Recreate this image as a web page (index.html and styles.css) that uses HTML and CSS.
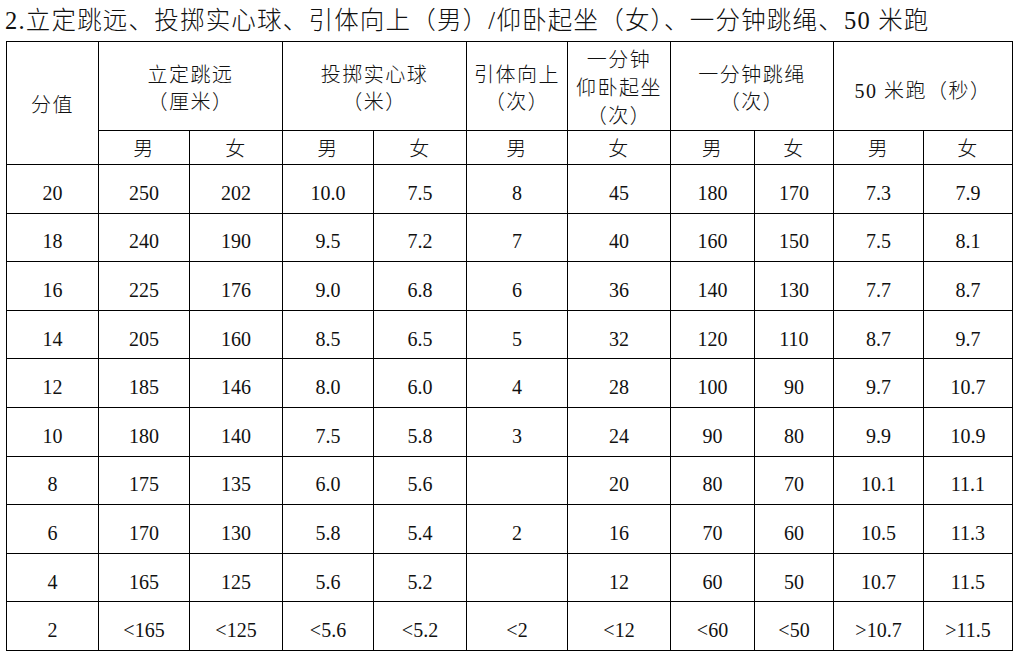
FILE: index.html
```html
<!DOCTYPE html>
<html lang="zh-CN">
<head>
<meta charset="utf-8">
<title>体育评分标准</title>
<link rel="stylesheet" href="styles.css">
</head>
<body>
<h1 class="title">2.立定跳远、投掷实心球、引体向上（男）/仰卧起坐（女）、一分钟跳绳、50 米跑</h1>
<table class="score">
  <colgroup>
    <col class="c1"><col class="c2"><col class="c3"><col class="c4"><col class="c5"><col class="c6"><col class="c7"><col class="c8"><col class="c9"><col class="c10"><col class="c11">
  </colgroup>
  <thead>
    <tr class="h1">
      <th rowspan="2" class="score-col">分值</th>
      <th colspan="2">立定跳远<br>（厘米）</th>
      <th colspan="2">投掷实心球<br>（米）</th>
      <th>引体向上<br>（次）</th>
      <th class="three">一分钟<br>仰卧起坐<br>（次）</th>
      <th colspan="2">一分钟跳绳<br>（次）</th>
      <th colspan="2" class="run">50 米跑（秒）</th>
    </tr>
    <tr class="h2">
      <th>男</th><th>女</th><th>男</th><th>女</th><th>男</th><th>女</th><th>男</th><th>女</th><th>男</th><th>女</th>
    </tr>
  </thead>
  <tbody>
    <tr><td>20</td><td>250</td><td>202</td><td>10.0</td><td>7.5</td><td>8</td><td>45</td><td>180</td><td>170</td><td>7.3</td><td>7.9</td></tr>
    <tr><td>18</td><td>240</td><td>190</td><td>9.5</td><td>7.2</td><td>7</td><td>40</td><td>160</td><td>150</td><td>7.5</td><td>8.1</td></tr>
    <tr><td>16</td><td>225</td><td>176</td><td>9.0</td><td>6.8</td><td>6</td><td>36</td><td>140</td><td>130</td><td>7.7</td><td>8.7</td></tr>
    <tr><td>14</td><td>205</td><td>160</td><td>8.5</td><td>6.5</td><td>5</td><td>32</td><td>120</td><td>110</td><td>8.7</td><td>9.7</td></tr>
    <tr><td>12</td><td>185</td><td>146</td><td>8.0</td><td>6.0</td><td>4</td><td>28</td><td>100</td><td>90</td><td>9.7</td><td>10.7</td></tr>
    <tr><td>10</td><td>180</td><td>140</td><td>7.5</td><td>5.8</td><td>3</td><td>24</td><td>90</td><td>80</td><td>9.9</td><td>10.9</td></tr>
    <tr><td>8</td><td>175</td><td>135</td><td>6.0</td><td>5.6</td><td></td><td>20</td><td>80</td><td>70</td><td>10.1</td><td>11.1</td></tr>
    <tr><td>6</td><td>170</td><td>130</td><td>5.8</td><td>5.4</td><td>2</td><td>16</td><td>70</td><td>60</td><td>10.5</td><td>11.3</td></tr>
    <tr><td>4</td><td>165</td><td>125</td><td>5.6</td><td>5.2</td><td></td><td>12</td><td>60</td><td>50</td><td>10.7</td><td>11.5</td></tr>
    <tr><td>2</td><td>&lt;165</td><td>&lt;125</td><td>&lt;5.6</td><td>&lt;5.2</td><td>&lt;2</td><td>&lt;12</td><td>&lt;60</td><td>&lt;50</td><td>&gt;10.7</td><td>&gt;11.5</td></tr>
  </tbody>
</table>
</body>
</html>
```
FILE: styles.css
```css
html, body {
  margin: 0;
  padding: 0;
  background: #ffffff;
}
body {
  font-family: "Liberation Serif", "Noto Sans CJK SC", serif;
  color: #111111;
}
.title {
  margin: 0;
  padding: 6px 0 0 5px;
  height: 41px;
  box-sizing: border-box;
  font-size: 24.5px;
  line-height: 30px;
  font-weight: 300;
  letter-spacing: 1.2px;
  white-space: nowrap;
}
.score {
  margin-left: 6px;
  border-collapse: collapse;
  table-layout: fixed;
  width: 1006px;
}
.c1 { width: 92px; }
.c2 { width: 91px; }
.c3 { width: 93px; }
.c4 { width: 91px; }
.c5 { width: 93px; }
.c6 { width: 101px; }
.c7 { width: 103px; }
.c8 { width: 84px; }
.c9 { width: 79px; }
.c10 { width: 90px; }
.c11 { width: 89px; }
.score th,
.score td {
  border: 1px solid #000000;
  padding: 0;
  text-align: center;
  vertical-align: middle;
  font-weight: 300;
  font-size: 20px;
}
.score th {
  line-height: 27px;
  letter-spacing: 1.5px;
}
.h1 { height: 88px; }
.h2 { height: 34px; }
.score .h1 th { padding-top: 5px; }
.score .h1 .three {
  line-height: 28px;
  padding-top: 4px;
}
.score .h1 .run { padding-top: 10px; }
.score .score-col { padding-top: 6px; }
.score .h2 th { padding-top: 3px; }
.score tbody tr { height: 48.6px; }
.score td {
  padding-top: 8px;
  line-height: 24px;
}
```
